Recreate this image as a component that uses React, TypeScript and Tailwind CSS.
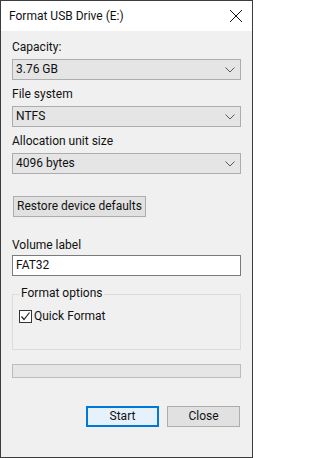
import React from "react";

function Chevron() {
  return (
    <svg width="10" height="6" viewBox="0 0 10 6" className="shrink-0">
      <path d="M0.5 0.5 L5 5 L9.5 0.5" fill="none" stroke="#5a5a5a" strokeWidth="1" />
    </svg>
  );
}

function Combo({ value }: { value: string }) {
  return (
    <div className="h-[21px] w-full border border-[#adadad] bg-[#e5e5e5] flex items-center justify-between pl-[3px] pr-[5px]">
      <span className="leading-[15px]">{value}</span>
      <Chevron />
    </div>
  );
}

function Label({ children, className = "" }: { children: React.ReactNode; className?: string }) {
  return <div className={`leading-[15px] h-[15px] ${className}`}>{children}</div>;
}

export default function App() {
  return (
    <div className="w-[253px] h-[458px] border border-[#3c3c3c] flex flex-col font-['Roboto',sans-serif] text-[12px] text-[#111] select-none">
      <div className="h-[30px] bg-white flex items-center justify-between pl-[8px] pr-[8px]">
        <span className="text-[12px] leading-[15px]">Format USB Drive (E:)</span>
        <svg width="14" height="14" viewBox="0 0 14 14" className="mr-[1px]">
          <path d="M1 1 L13 13 M13 1 L1 13" stroke="#111" strokeWidth="1" fill="none" />
        </svg>
      </div>

      <div className="flex-1 bg-[#f0f0f0] px-[11px] pt-[9px] flex flex-col">
        <Label>Capacity:</Label>
        <div className="mt-[4px]">
          <Combo value="3.76 GB" />
        </div>

        <Label className="mt-[7px]">File system</Label>
        <div className="mt-[4px]">
          <Combo value="NTFS" />
        </div>

        <Label className="mt-[7px]">Allocation unit size</Label>
        <div className="mt-[4px]">
          <Combo value="4096 bytes" />
        </div>

        <div className="mt-[22px] pl-[1px]">
          <button className="h-[21px] w-[133px] border border-[#adadad] bg-[#e1e1e1] leading-[15px]">
            Restore device defaults
          </button>
        </div>

        <Label className="mt-[21px]">Volume label</Label>
        <div className="mt-[2px] h-[21px] w-full border border-[#7a7a7a] bg-white flex items-center pl-[3px]">
          <span className="leading-[15px]">FAT32</span>
        </div>

        <div className="mt-[18px] relative h-[56px] border border-[#dcdcdc]">
          <span className="absolute -top-[9px] left-[6px] px-[2px] bg-[#f0f0f0] leading-[15px]">
            Format options
          </span>
          <div className="flex items-center gap-[2px] pl-[6px] pt-[14px]">
            <div className="w-[13px] h-[13px] border border-[#333] bg-white flex items-center justify-center">
              <svg width="11" height="11" viewBox="0 0 11 11">
                <path d="M1.5 5.5 L4 8.5 L9.5 1.5" fill="none" stroke="#222" strokeWidth="1.2" />
              </svg>
            </div>
            <span className="leading-[15px]">Quick Format</span>
          </div>
        </div>

        <div className="mt-[14px] h-[14px] w-full border border-[#bcbcbc] bg-[#e6e6e6]" />

        <div className="mt-[28px] flex justify-end gap-[8px] pr-[1px]">
          <button className="h-[21px] w-[73px] border-2 border-[#0078d7] bg-[#e5f1fb] leading-[15px]">
            Start
          </button>
          <button className="h-[21px] w-[73px] border border-[#adadad] bg-[#e1e1e1] leading-[15px]">
            Close
          </button>
        </div>
      </div>
    </div>
  );
}
